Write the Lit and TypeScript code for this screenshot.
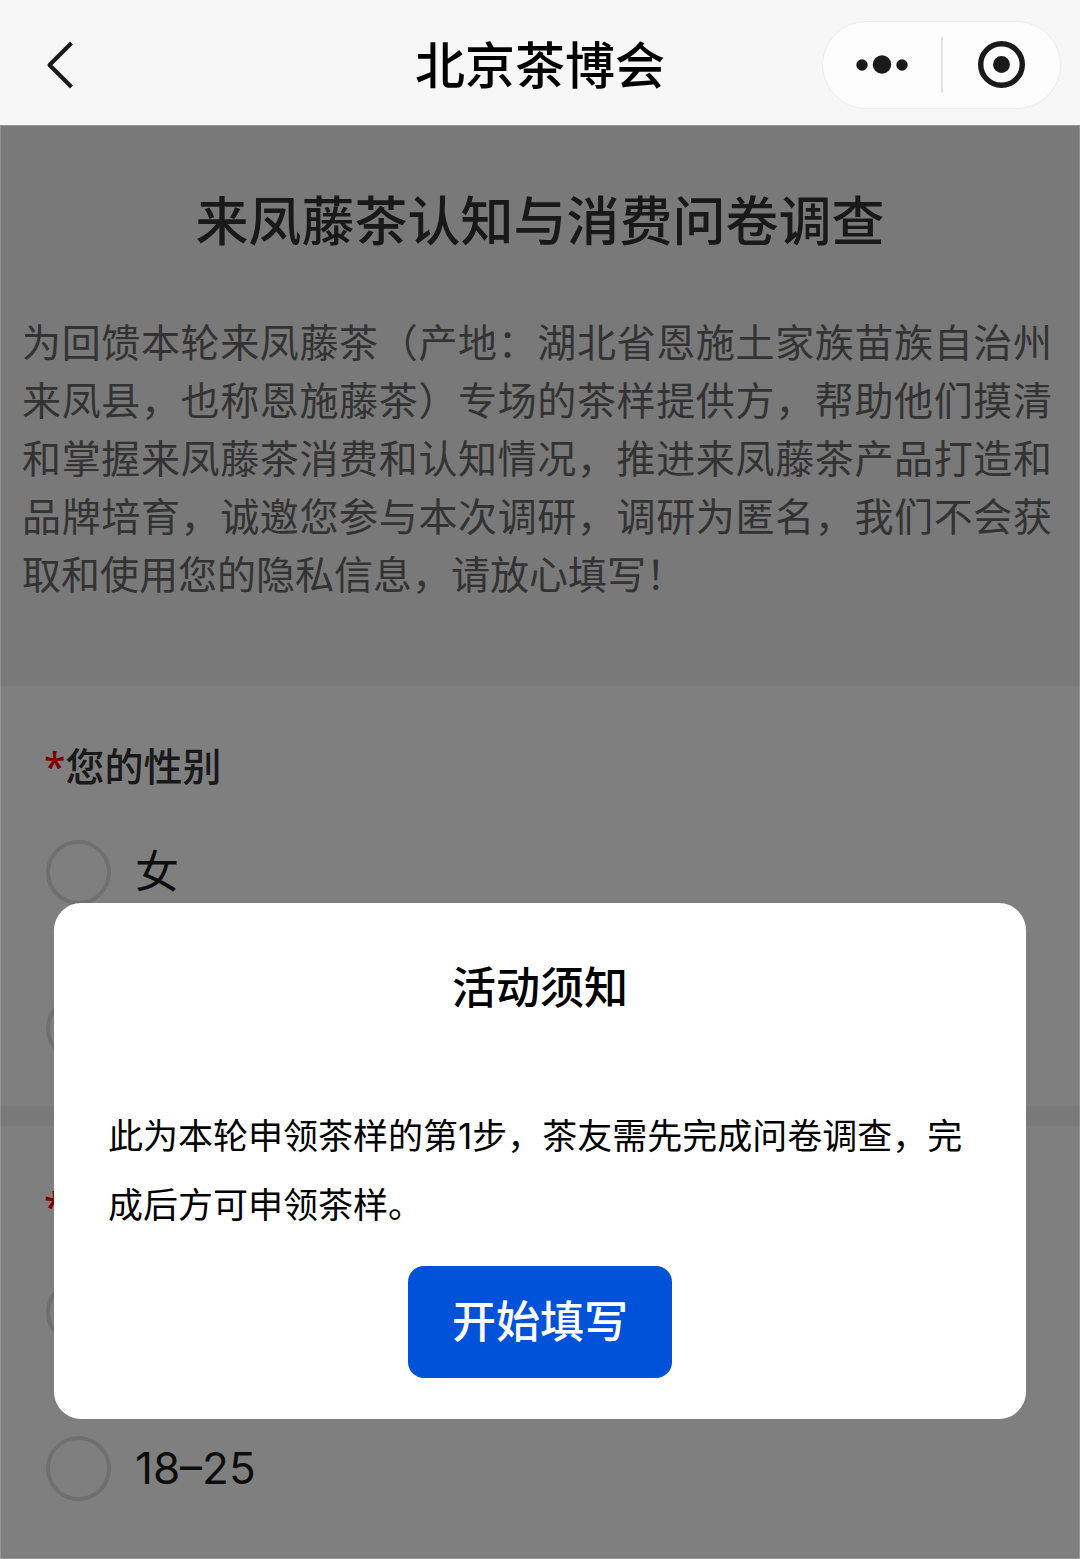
import { LitElement, html, css } from "lit";
import { customElement, property } from "lit/decorators.js";

interface Question {
  id: string;
  title: string;
  options: string[];
}

const QUESTIONS: Question[] = [
  { id: "gender", title: "您的性别", options: ["女", "男"] },
  { id: "age", title: "您的年龄", options: ["18以下", "18–25"] },
];

@customElement("nav-header")
class NavHeader extends LitElement {
  @property() heading = "";

  static styles = css`
    :host {
      display: block;
    }
    .bar {
      display: grid;
      grid-template-columns: 1fr auto 1fr;
      align-items: center;
      height: 125px;
      padding: 4px 19px 0;
      box-sizing: border-box;
      background: #f7f7f7;
    }
    .title {
      margin: 0;
      padding-top: 2px;
      font-size: 50px;
      line-height: 60px;
      font-weight: 500;
      color: #000;
    }
    button {
      display: flex;
      align-items: center;
      justify-content: center;
      border: 0;
      padding: 0;
      background: none;
      color: #1a1a1a;
    }
    .back {
      width: 80px;
      height: 60px;
    }
    .capsule {
      justify-self: end;
      display: flex;
      align-items: center;
      width: 239px;
      height: 88px;
      box-sizing: border-box;
      border: 1px solid #ebebeb;
      border-radius: 44px;
      background: #fdfdfd;
    }
    .capsule button {
      flex: 1;
      height: 100%;
    }
    .divider {
      width: 2px;
      height: 56px;
      background: #e2e2e2;
    }
    svg {
      display: block;
    }
  `;

  render() {
    return html`
      <header class="bar">
        <button class="back" aria-label="返回">
          <svg width="60" height="60" viewBox="0 0 60 60" fill="none" stroke="currentColor" stroke-width="4" stroke-linejoin="round">
            <path d="M42.5 8 20.5 30 42.5 52" />
          </svg>
        </button>
        <h1 class="title">${this.heading}</h1>
        <div class="capsule">
          <button aria-label="更多">
            <svg width="56" height="20" viewBox="0 0 56 20" fill="currentColor">
              <circle cx="8" cy="10" r="5.7" />
              <circle cx="28" cy="9.5" r="9.2" />
              <circle cx="48" cy="10" r="5.7" />
            </svg>
          </button>
          <span class="divider"></span>
          <button aria-label="关闭">
            <svg width="48" height="48" viewBox="0 0 48 48">
              <circle cx="24.5" cy="23.5" r="20.8" fill="none" stroke="currentColor" stroke-width="5.4" />
              <circle cx="24.5" cy="23.5" r="8.4" fill="currentColor" />
            </svg>
          </button>
        </div>
      </header>
    `;
  }
}

@customElement("survey-question")
class SurveyQuestion extends LitElement {
  @property({ attribute: false }) question!: Question;

  static styles = css`
    :host {
      display: block;
      background: #fff;
    }
    fieldset {
      margin: 0;
      border: 0;
      padding: 0;
      min-width: 0;
    }
    legend {
      display: block;
      box-sizing: border-box;
      height: 108px;
      padding: 52px 44px 0;
      font-size: 39px;
      line-height: 58px;
      font-weight: 500;
      color: #333;
    }
    .required {
      font-family: "Noto Sans", sans-serif;
      line-height: 1;
      color: #f00;
    }
    .option {
      display: flex;
      align-items: center;
      gap: 24px;
      height: 156px;
      padding: 0 46px;
      font-size: 44px;
      line-height: 60px;
      color: #1a1a1a;
    }
    input {
      appearance: none;
      flex: none;
      width: 65px;
      height: 65px;
      margin: 0;
      box-sizing: border-box;
      border: 4px solid #dedede;
      border-radius: 50%;
    }
    input:checked {
      border: 20px solid #0052d9;
    }
  `;

  render() {
    const { id, title, options } = this.question;
    return html`
      <fieldset>
        <legend><span class="required">*</span>${title}</legend>
        ${options.map(
          (text, i) => html`
            <label class="option" for="${id}-${i}">
              <input type="radio" id="${id}-${i}" name=${id} value=${text} />
              <span>${text}</span>
            </label>
          `
        )}
      </fieldset>
    `;
  }
}

@customElement("notice-dialog")
class NoticeDialog extends LitElement {
  static styles = css`
    :host {
      display: block;
    }
    .card {
      display: flex;
      flex-direction: column;
      align-items: center;
      padding: 55px 54px 41px;
      border-radius: 27px;
      background: #fff;
      color: #000;
    }
    h2 {
      margin: 0 0 84px;
      font-size: 44px;
      line-height: 60px;
      font-weight: 500;
    }
    p {
      margin: 0 0 26px;
      align-self: stretch;
      font-size: 35px;
      line-height: 69px;
    }
    button {
      min-width: 264px;
      padding: 26px 44px;
      border: 0;
      border-radius: 16px;
      background: #0052d9;
      color: #fff;
      font-family: inherit;
      font-size: 44px;
      line-height: 60px;
      font-weight: 500;
    }
  `;

  render() {
    return html`
      <section class="card" role="dialog" aria-modal="true" aria-labelledby="notice-title">
        <h2 id="notice-title">活动须知</h2>
        <p>此为本轮申领茶样的第1步，茶友需先完成问卷调查，完成后方可申领茶样。</p>
        <button type="button">开始填写</button>
      </section>
    `;
  }
}

@customElement("app-root")
class AppRoot extends LitElement {
  static styles = css`
    :host {
      display: flex;
      flex-direction: column;
      min-height: 100vh;
      font-family: Inter, "Noto Sans CJK SC", sans-serif;
    }
    .page {
      position: relative;
      flex: 1;
      display: flex;
      flex-direction: column;
      background: #f2f2f2;
    }
    .intro {
      padding: 65px 22px 82px;
    }
    .intro h2 {
      margin: 0 0 60px;
      text-align: center;
      font-size: 53px;
      line-height: 64px;
      font-weight: 500;
      color: #333;
    }
    .intro p {
      margin: 0;
      padding-right: 6px;
      font-size: 39px;
      line-height: 58px;
      text-align: justify;
      color: #666;
    }
    .questions {
      flex: 1;
      display: flex;
      flex-direction: column;
      gap: 20px;
    }
    survey-question:last-child {
      flex: 1;
    }
    .mask {
      position: absolute;
      inset: 0;
      display: flex;
      flex-direction: column;
      justify-content: flex-end;
      box-sizing: border-box;
      padding: 0 53px 139px;
      border: 1px solid rgba(255, 255, 255, 0.2);
      background: rgba(0, 0, 0, 0.5);
    }
  `;

  render() {
    return html`
      <nav-header heading="北京茶博会"></nav-header>
      <main class="page">
        <section class="intro">
          <h2>来凤藤茶认知与消费问卷调查</h2>
          <p>为回馈本轮来凤藤茶（产地：湖北省恩施土家族苗族自治州来凤县，也称恩施藤茶）专场的茶样提供方，帮助他们摸清和掌握来凤藤茶消费和认知情况，推进来凤藤茶产品打造和品牌培育，诚邀您参与本次调研，调研为匿名，我们不会获取和使用您的隐私信息，请放心填写！</p>
        </section>
        <div class="questions">
          ${QUESTIONS.map((q) => html`<survey-question .question=${q}></survey-question>`)}
        </div>
        <div class="mask"><notice-dialog></notice-dialog></div>
      </main>
    `;
  }
}
